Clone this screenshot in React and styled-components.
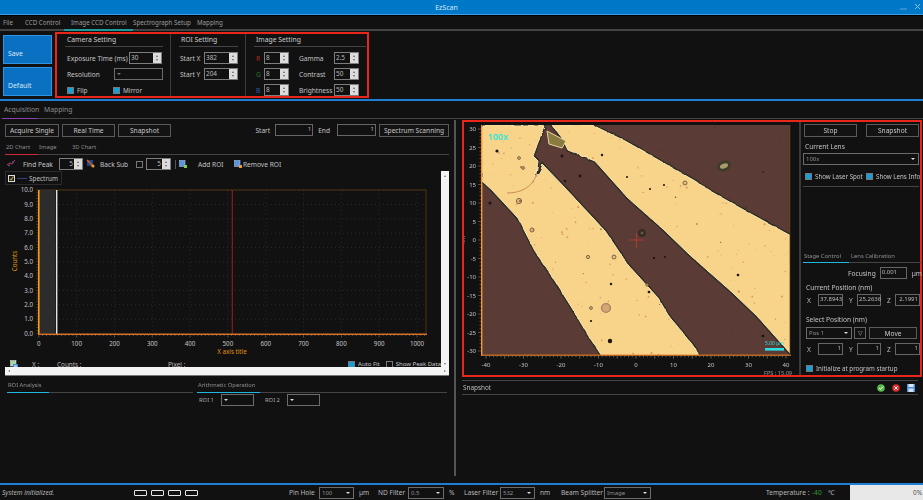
import React from 'react';
import styled, { createGlobalStyle } from 'styled-components';

const GlobalStyle = createGlobalStyle`
  html, body { margin: 0; padding: 0; background: #111; }
  body { font-family: "Noto Sans", "Liberation Sans", sans-serif; font-size: 6.6px; color: #c4c4c4; }
  * { box-sizing: border-box; }
`;

const Page = styled.div`
  width: 923px;
  height: 500px;
  display: flex;
  flex-direction: column;
  overflow: hidden;
  background: #111;
`;

const TitleBar = styled.div`
  height: 15px;
  flex: none;
  display: flex;
  align-items: center;
  justify-content: center;
  position: relative;
  background: #0078c8;
  border-bottom: 1px solid #3f9fe6;
  box-shadow: 0 1px 0 #000;
  color: #d5e8f6;
  font-size: 7px;
  padding-right: 30px;
`;

const WindowButtons = styled.div`
  position: absolute;
  right: 2px;
  top: 3px;
  display: flex;
  gap: 7px;
  align-items: center;
`;

const MenuBar = styled.div`
  height: 16px;
  flex: none;
  display: flex;
  align-items: flex-end;
  border-bottom: 2px solid #444;
  padding-left: 3px;
`;

const MenuItem = styled.div`
  width: ${(p) => p.$w}px;
  height: 13px;
  margin-bottom: -2px;
  padding-left: ${(p) => p.$pad || 0}px;
  border-bottom: 2px solid ${(p) => (p.$active ? '#1f9a9a' : 'transparent')};
  color: #9c9c9c;
  font-size: 6.2px;
  line-height: 10px;
`;

const Ribbon = styled.div`
  height: 70px;
  flex: none;
  display: flex;
  padding-left: 3px;
  gap: 3px;
  border-bottom: 2px solid #1f7fd4;
`;

const SideButtons = styled.div`
  display: flex;
  flex-direction: column;
  gap: 3px;
  padding-top: 4px;
`;

const BlueButton = styled.div`
  width: 49px;
  height: 29px;
  background: #0a70c2;
  border: 1px solid #2f95e0;
  color: #d9e9f5;
  font-size: 6.8px;
  padding: 13px 0 0 4px;
`;

const RedBox = styled.div`
  border: 2px solid #e8261a;
  background: #111;
`;

const SettingsBox = styled(RedBox)`
  width: 314px;
  height: 66px;
  margin-top: 1px;
  display: flex;
`;

const SettingGroup = styled.div`
  width: ${(p) => p.$w}px;
  height: 62px;
  padding: 0 ${(p) => p.$right || 0}px 0 ${(p) => p.$left || 0}px;
  border-right: ${(p) => (p.$last ? 'none' : '1px solid #3c3c3c')};
`;

const GroupTitle = styled.div`
  height: 13px;
  line-height: 11px;
  font-size: 6.8px;
  color: #cfcfcf;
  padding-left: 2px;
  border-bottom: 1px solid #444;
  margin-bottom: 5px;
`;

const FieldGrid = styled.div`
  display: grid;
  grid-template-columns: ${(p) => p.$cols};
  grid-auto-rows: 12px;
  row-gap: 4px;
  align-items: center;
`;

const Label = styled.span`
  color: ${(p) => p.$color || '#c4c4c4'};
  font-size: ${(p) => p.$size || 6.6}px;
  white-space: nowrap;
  padding-left: ${(p) => p.$pad || 0}px;
`;

const SpinFrame = styled.div`
  width: ${(p) => p.$w}px;
  height: 12px;
  display: flex;
  border: 1px solid #7d7d7d;
  background: #111;
`;

const SpinValue = styled.div`
  flex: 1;
  font-size: 6.4px;
  line-height: 9px;
  padding: 0 1px;
  text-align: ${(p) => (p.$right ? 'right' : 'left')};
  color: #bcbcbc;
`;

const SpinArrows = styled.div`
  width: 8px;
  background: #dcdcdc;
  display: flex;
  flex-direction: column;
  align-items: center;
  justify-content: center;
  gap: 2px;
  &::before, &::after {
    content: '';
    border-left: 1.5px solid transparent;
    border-right: 1.5px solid transparent;
  }
  &::before { border-bottom: 2px solid #666; }
  &::after { border-top: 2px solid #666; }
`;

const SelectFrame = styled.div`
  width: ${(p) => p.$w}px;
  height: ${(p) => p.$h || 12}px;
  flex: none;
  display: flex;
  align-items: center;
  justify-content: space-between;
  padding: 0 3px 0 2px;
  border: 1px solid ${(p) => p.$border || '#6c6c6c'};
  background: #111;
  font-size: 6px;
  color: #8f8f8f;
  &::after {
    content: '';
    border-left: 2.5px solid transparent;
    border-right: 2.5px solid transparent;
    border-top: 2.5px solid ${(p) => p.$arrow || '#ddd'};
  }
`;

const CheckRow = styled.div`
  display: flex;
  align-items: center;
  gap: 3px;
  font-size: ${(p) => p.$size || 6.4}px;
  white-space: nowrap;
  color: #c4c4c4;
`;

const CheckBox = styled.span`
  width: 7px;
  height: 7px;
  flex: none;
  border: 1px solid #777;
  background: ${(p) => (p.$on ? '#17a0d8' : '#111')};
`;

const FlipRow = styled.div`
  display: grid;
  grid-template-columns: 46px 50px;
  height: 12px;
  align-items: center;
`;

const Main = styled.div`
  flex: 1;
  min-height: 0;
  display: flex;
`;

const LeftColumn = styled.div`
  width: 457px;
  flex: none;
  display: flex;
  flex-direction: column;
`;

const PrimaryTabs = styled.div`
  height: 18px;
  flex: none;
  display: flex;
  gap: 4px;
  align-items: flex-end;
  margin-left: 2px;
  border-bottom: 1px solid #444;
  color: #8c8c8c;
  font-size: 6.8px;
`;

const PrimaryTab = styled.div`
  height: 14px;
  margin-bottom: -1px;
  width: ${(p) => p.$w}px;
  line-height: 10px;
  padding-left: 2px;
  border-bottom: 1px solid ${(p) => (p.$active ? '#8a3fb5' : 'transparent')};
`;

const LeftBody = styled.div`
  flex: 1;
  min-height: 0;
  display: flex;
  padding-top: 1px;
`;

const LeftContent = styled.div`
  width: 454px;
  flex: none;
  padding: 3px 0 0 5px;
`;

const ScrollRail = styled.div`
  width: 2px;
  height: 356px;
  background: #555;
`;

const AcquireBar = styled.div`
  height: 14px;
  display: flex;
  align-items: center;
  gap: 3px;
  width: 444px;
`;

const OutlineButton = styled.div`
  width: ${(p) => p.$w}px;
  height: ${(p) => p.$h || 13}px;
  flex: none;
  display: flex;
  align-items: center;
  justify-content: center;
  border: 1px solid #5a5a5a;
  background: #131313;
  font-size: 6.6px;
  color: #c8c8c8;
  white-space: nowrap;
`;

const BarSpacer = styled.div`
  flex: 1;
`;

const NumberBox = styled.div`
  width: ${(p) => p.$w}px;
  height: ${(p) => p.$h || 12}px;
  flex: none;
  border: 1px solid #666;
  background: #111;
  color: #bbb;
  font-size: 6px;
  line-height: ${(p) => (p.$h || 12) - 3}px;
  padding: 0 1px;
  text-align: ${(p) => (p.$left ? 'left' : 'right')};
`;

const ChartTabs = styled.div`
  width: 444px;
  height: 14px;
  margin-top: 4px;
  display: flex;
  align-items: flex-end;
  border-bottom: 1px solid #444;
  font-size: 5.8px;
  color: #8f8f8f;
`;

const ChartTab = styled.div`
  width: ${(p) => p.$w}px;
  height: 12px;
  margin-bottom: -1px;
  line-height: 9px;
  padding-left: 1px;
  border-bottom: 1px solid ${(p) => (p.$active ? '#d0263a' : 'transparent')};
`;

const ChartTools = styled.div`
  height: 14px;
  margin-top: 2px;
  display: flex;
  align-items: center;
`;

const ToolText = styled.span`
  font-size: 6.6px;
  color: #c4c4c4;
  white-space: nowrap;
  width: ${(p) => p.$w}px;
  padding-left: ${(p) => p.$pad || 0}px;
`;

const ChartFrame = styled.div`
  width: 444px;
  height: 205px;
  position: relative;
  border-bottom: 1px solid #777;
`;

const Legend = styled.div`
  width: 57px;
  height: 14px;
  display: flex;
  align-items: center;
  gap: 2px;
  padding-left: 2px;
  border: 1px solid #2c2c2c;
  font-size: 6.4px;
  color: #c0c0c0;
`;

const LegendCheck = styled.span`
  width: 7px;
  height: 7px;
  border: 1px solid #ddd;
  background: #222;
  color: #f2d12e;
  font-size: 7px;
  line-height: 5px;
`;

const LegendLine = styled.span`
  width: 10px;
  height: 1px;
  background: #33407c;
`;

const ChartSvg = styled.svg`
  display: block;
  width: 436px;
  height: 174px;
`;

const ReadoutRow = styled.div`
  width: 436px;
  height: 10px;
  display: flex;
  align-items: center;
  padding-left: 5px;
  font-size: 6.4px;
  color: #b8b8b8;
`;

const ReadoutText = styled.span`
  width: ${(p) => p.$w}px;
  white-space: nowrap;
`;

const VScroll = styled.div`
  position: absolute;
  right: 0;
  top: 0;
  width: 8px;
  height: 196px;
  background: #f4f4f4;
  display: flex;
  flex-direction: column;
  justify-content: space-between;
  align-items: center;
  padding: 4px 0 2px;
  &::before, &::after {
    content: '';
    border-left: 1.5px solid transparent;
    border-right: 1.5px solid transparent;
  }
  &::before { border-bottom: 2px solid #777; }
  &::after { border-top: 2px solid #777; }
`;

const HScroll = styled.div`
  position: absolute;
  left: 0;
  bottom: 0;
  width: 444px;
  height: 8px;
  background: #f4f4f4;
  display: flex;
  justify-content: space-between;
  align-items: center;
  padding: 0 3px;
  &::before, &::after {
    content: '';
    border-top: 1.5px solid transparent;
    border-bottom: 1.5px solid transparent;
  }
  &::before { border-right: 2px solid #777; }
  &::after { border-left: 2px solid #777; }
`;

const AnalysisRow = styled.div`
  display: flex;
  gap: 4px;
  margin-top: 5px;
  padding-left: 2px;
`;

const AnalysisPane = styled.div`
  width: ${(p) => p.$w}px;
`;

const AnalysisTab = styled.div`
  height: 12px;
  border-bottom: 1px solid #444;
  font-size: 5.8px;
  line-height: 9px;
  color: #8f8f8f;
  padding-left: 1px;
  position: relative;
  &::after {
    content: '';
    position: absolute;
    left: 0;
    bottom: -1px;
    height: 1px;
    width: ${(p) => p.$bar}px;
    background: #20b8e0;
  }
`;

const RoiRow = styled.div`
  display: flex;
  align-items: center;
  margin-top: 1px;
  padding-left: 2px;
`;

const RoiLabel = styled.span`
  width: ${(p) => p.$w}px;
  font-size: 5.8px;
  color: #a8a8a8;
`;

const RightColumn = styled.div`
  flex: 1;
  min-width: 0;
  padding-left: 5px;
  display: flex;
  flex-direction: column;
`;

const RightTopRule = styled.div`
  height: 18px;
  flex: none;
  border-bottom: 1px solid #444;
  margin-left: -5px;
`;

const ViewBox = styled(RedBox)`
  width: 460px;
  height: 257px;
  margin-top: 1px;
  display: flex;
`;

const MicroSvg = styled.svg`
  display: block;
  width: 335px;
  height: 253px;
  flex: none;
`;

const StagePanel = styled.div`
  flex: 1;
  border-left: 2px solid #3a3a3a;
  padding: 2px 0 0 2px;
`;

const StageButtons = styled.div`
  display: flex;
  gap: 9px;
  padding-left: 1px;
`;

const StageHeading = styled.div`
  font-size: 6.6px;
  color: #c4c4c4;
  padding-left: ${(p) => p.$pad || 1}px;
  margin-top: ${(p) => p.$top}px;
  height: 9px;
  line-height: 9px;
`;

const ChecksRow = styled.div`
  display: grid;
  grid-template-columns: 61px 60px;
  margin-top: 7px;
  padding-left: 2px;
`;

const ThinRule = styled.div`
  height: 1px;
  background: #444;
  margin-top: 5px;
  width: 116px;
`;

const StageTabs = styled.div`
  margin-top: 65px;
  width: 118px;
  height: 11px;
  display: flex;
  border-bottom: 1px solid #444;
  font-size: 5.8px;
  color: #8f8f8f;
  line-height: 8px;
`;

const StageTab = styled.div`
  width: ${(p) => p.$w}px;
  height: 11px;
  padding-left: 1px;
  border-bottom: 1px solid ${(p) => (p.$active ? '#20b8e0' : 'transparent')};
`;

const FocusRow = styled.div`
  display: flex;
  align-items: center;
  justify-content: flex-end;
  gap: 4px;
  margin-top: 4px;
  padding-right: 4px;
  height: 12px;
`;

const XyzRow = styled.div`
  display: grid;
  grid-template-columns: 12px 25px 14px 24px 14px 25px;
  align-items: center;
  margin-top: ${(p) => p.$top}px;
  padding-left: 3px;
  width: 116px;
`;

const AxisLetter = styled.span`
  font-size: 6.6px;
  color: #bdbdbd;
  padding-left: ${(p) => p.$pad || 1}px;
`;

const SelectRow = styled.div`
  display: flex;
  gap: 2px;
  margin-top: 3px;
  padding-left: 3px;
  align-items: center;
`;

const TriangleButton = styled.div`
  width: 12px;
  height: 12px;
  border: 1px solid #666;
  color: #aaa;
  font-size: 6px;
  line-height: 10px;
  text-align: center;
`;

const InitRow = styled.div`
  margin-top: 9px;
  padding-left: 3px;
`;

const SnapshotBar = styled.div`
  width: 456px;
  height: 15px;
  margin-top: 3px;
  border-top: 1px solid #444;
  border-bottom: 1px solid #444;
  display: flex;
  align-items: center;
  justify-content: space-between;
  padding: 0 3px 0 1px;
  font-size: 6.4px;
  color: #bdbdbd;
`;

const SnapshotIcons = styled.div`
  display: flex;
  gap: 7px;
  align-items: center;
`;

const StatusBar = styled.div`
  height: 17px;
  flex: none;
  display: flex;
  align-items: center;
  border-top: 2px solid #1f7fd4;
  background: #111;
  font-size: 6.6px;
`;

const StatusMessage = styled.span`
  width: 134px;
  padding-left: 2px;
  font-style: italic;
  color: #b4b4b4;
`;

const Leds = styled.div`
  width: 156px;
  display: flex;
  gap: 4px;
`;

const Led = styled.span`
  width: 13px;
  height: 6px;
  border: 1px solid #e8e8e8;
  border-radius: 1px;
`;

const StatusText = styled.span`
  width: ${(p) => p.$w}px;
  flex: none;
  color: ${(p) => p.$color || '#b8b8b8'};
  white-space: nowrap;
`;

const Progress = styled.div`
  width: 73px;
  height: 15px;
  flex: none;
  background: #e8e8e8;
  color: #555;
  font-size: 6.4px;
  line-height: 15px;
  text-align: right;
  padding-right: 1px;
`;

function Spin({ w, value, right }) {
  return (
    <SpinFrame $w={w}>
      <SpinValue $right={right}>{value}</SpinValue>
      <SpinArrows />
    </SpinFrame>
  );
}

function Check({ on, children, size }) {
  return (
    <CheckRow $size={size}>
      <CheckBox $on={on} />
      {children}
    </CheckRow>
  );
}

function PeakIcon() {
  return (
    <svg width="9" height="8" viewBox="0 0 9 8">
      <path d="M0 6 L3 4 L5 5 L8 1" stroke="#d3324a" strokeWidth="1" fill="none" />
      <path d="M1 7 L3 6 M5 3 L7 3" stroke="#3c68d8" strokeWidth="1" />
    </svg>
  );
}

function BackSubIcon() {
  return (
    <svg width="9" height="9" viewBox="0 0 9 9">
      <rect x="1" y="1" width="6" height="6" fill="#24467e" />
      <path d="M1 1 L7 7" stroke="#e05a2a" strokeWidth="1.2" />
      <circle cx="7" cy="7" r="1.6" fill="#f09a20" />
    </svg>
  );
}

function RoiIcon({ badge }) {
  return (
    <svg width="8" height="8" viewBox="0 0 8 8">
      <rect x="0.5" y="0.5" width="5.5" height="6" fill="#5f95d8" stroke="#9dc2ec" strokeWidth="0.6" />
      <rect x="5" y="5" width="3" height="3" fill={badge} />
    </svg>
  );
}

function SaveDataIcon() {
  return (
    <svg width="8" height="8" viewBox="0 0 8 8">
      <rect x="0.5" y="0.5" width="5.5" height="5.5" fill="#a9d4a4" stroke="#e6e6e6" strokeWidth="0.5" />
      <rect x="3" y="4" width="5" height="4" fill="#3a88d8" />
      <rect x="4" y="5.5" width="3" height="1" fill="#fff" />
    </svg>
  );
}

function SnapshotIcon({ kind }) {
  if (kind === 'save') {
    return (
      <svg width="8" height="8" viewBox="0 0 8 8">
        <rect width="8" height="8" fill="#4f8fe0" />
        <rect x="1.5" y="0" width="5" height="3" fill="#dbe9f7" />
        <rect x="1.5" y="4.5" width="5" height="3.5" fill="#cfe0f2" />
      </svg>
    );
  }
  const ok = kind === 'ok';
  return (
    <svg width="8" height="8" viewBox="0 0 8 8">
      <circle cx="4" cy="4" r="3.8" fill={ok ? '#58b848' : '#e02c2c'} />
      <path
        d={ok ? 'M2 4 L3.5 5.5 L6 2.5' : 'M2.4 2.4 L5.6 5.6 M5.6 2.4 L2.4 5.6'}
        stroke="#fff"
        strokeWidth="1"
        fill="none"
      />
    </svg>
  );
}

const xTicks = [0, 100, 200, 300, 400, 500, 600, 700, 800, 900, 1000];
const yTicks = [10, 9, 8, 7, 6, 5, 4, 3, 2, 1, 0];
const range = (n) => Array.from({ length: n }, (_, i) => i);

function SpectrumChart() {
  // viewBox uses the screen coordinates of the plot
  const px = (v) => 38.8 + v * 0.3782;
  const py = (v) => 335.5 - v * 14.33;
  return (
    <ChartSvg viewBox="5 187 436 174">
      {xTicks.map((t) => (
        <line key={t} x1={px(t)} x2={px(t)} y1="192" y2="336" stroke="#3a3a3a" strokeWidth="0.6" strokeDasharray="1 3" />
      ))}
      {yTicks.map((t) => (
        <line key={t} x1="39" x2="426" y1={py(t)} y2={py(t)} stroke="#3a3a3a" strokeWidth="0.6" strokeDasharray="1 3" />
      ))}
      <rect x="39.5" y="192" width="449" height="0" />
      <rect x="39" y="192" width="387" height="144" fill="none" stroke="#6a4412" strokeWidth="0.7" />
      <rect x="39.5" y="192" width="16" height="144" fill="#2c2c2c" />
      <rect x="56" y="192" width="1.4" height="144" fill="#e2e2e2" />
      <rect x="231.8" y="192" width="0.9" height="144" fill="#b3201a" />
      <rect x="38" y="192" width="1.6" height="145" fill="#f59a1e" />
      <rect x="38" y="335.6" width="389" height="1.4" fill="#d8702a" />
      {range(51).map((i) => (
        <line key={i} x1="36.5" x2="38" y1={192 + i * 2.866} y2={192 + i * 2.866} stroke="#a87428" strokeWidth="0.5" />
      ))}
      {range(103).map((i) => (
        <line key={i} x1={px(i * 10)} x2={px(i * 10)} y1="337" y2={i % 10 === 0 ? 339.5 : 338} stroke="#9a8a70" strokeWidth="0.5" />
      ))}
      {yTicks.map((t) => (
        <text key={t} x="33" y={py(t) + 2.2} textAnchor="end" fontSize="6.2" fill="#c4c4c4">{t.toFixed(1)}</text>
      ))}
      {xTicks.map((t) => (
        <text key={t} x={px(t)} y="347.5" textAnchor="middle" fontSize="6.2" fill="#c4c4c4">{t}</text>
      ))}
      <text x="232" y="355.5" textAnchor="middle" fontSize="6.2" fill="#e0930f">X axis title</text>
      <text transform="translate(17 263) rotate(-90)" textAnchor="middle" fontSize="6.2" fill="#e0930f">Counts</text>
    </ChartSvg>
  );
}

// seeded so the speckle is the same on every render
function speckle(count, seed, x0, y0, w, h) {
  let s = seed;
  const next = () => {
    s = (s * 16807) % 2147483647;
    return s / 2147483647;
  };
  return range(count).map(() => ({
    x: x0 + next() * w,
    y: y0 + next() * h,
    r: 0.3 + next() * 0.8,
    o: 0.25 + next() * 0.6,
  }));
}

const goldPolys = [
  '482,127 541,127 544,128 533,158 538,163 535,182 543,167 565,190 605,233 628,267 658,300 668,317 695,350 699,358 602,358 588,337 572,310 555,283 535,253 518,220 492,192 482,183',
  '552,127 592,127 625,143 660,163 695,183 710,193 740,210 791,238 791,356 757,318 733,295 690,257 662,230 628,200 595,163 568,152 562,140',
];

const goldDots = speckle(170, 4711, 482, 127, 308, 230);
const darkDots = speckle(60, 90210, 482, 127, 308, 230);

const bigSpots = [
  [519, 140, 1.2], [498, 155, 1.3], [520, 169, 2], [523, 170, 1], [519, 203, 2.6], [532, 232, 1.6],
], ringSpots = [
  [519, 160, 1.4], [523, 170, 1.4], [519, 203, 2.6], [532, 232, 2], [588, 259, 1.6], [614, 259, 2],
  [591, 310, 1.4], [685, 185, 2], [647, 287, 1.2],
], blackSpots = [
  [490, 205, 1.6], [580, 178, 1.4], [565, 183, 1.2], [497, 153, 1.6], [611, 286, 1.2], [591, 323, 1.1],
  [610, 343, 2.2], [654, 260, 1.1], [665, 259, 1], [649, 294, 1.3], [627, 179, 1], [602, 157, 1.2],
  [562, 158, 1.4], [664, 187, 1], [763, 338, 1.3], [763, 174, 0.8], [738, 277, 1.3], [650, 191, 1],
];

function MicroscopeView() {
  return (
    <MicroSvg viewBox="464 124 335 253">
      <defs>
        <filter id="rough" x="-5%" y="-5%" width="110%" height="110%">
          <feTurbulence type="fractalNoise" baseFrequency="0.16" numOctaves="2" seed="4" />
          <feDisplacementMap in="SourceGraphic" scale="4" />
        </filter>
        <filter id="soft"><feGaussianBlur stdDeviation="1" /></filter>
        <filter id="fine"><feGaussianBlur stdDeviation="0.35" /></filter>
        <clipPath id="plate"><rect x="482" y="127" width="308" height="230" /></clipPath>
        <clipPath id="goldOnly">
          {goldPolys.map((p) => <polygon key={p} points={p} />)}
        </clipPath>
      </defs>
      <g clipPath="url(#plate)">
        <rect x="482" y="127" width="308" height="230" fill="#5b3b36" />
        <g filter="url(#rough)">
          {goldPolys.map((p) => (
            <polygon key={p} points={p} fill="none" stroke="#2b2d22" strokeWidth="3.4" />
          ))}
          {goldPolys.map((p) => (
            <polygon key={p} points={p} fill="#f8d38a" stroke="#ffe9b4" strokeWidth="1" />
          ))}
        </g>
        <g filter="url(#fine)">
          {darkDots.map((d) => (
            <circle key={`${d.x}`} cx={d.x} cy={d.y} r={d.r * 0.7} fill="#3a2b24" opacity={d.o} />
          ))}
          <g clipPath="url(#goldOnly)">
            {goldDots.map((d) => (
              <circle key={`${d.x}`} cx={d.x} cy={d.y} r={d.r} fill="#c8763e" opacity={d.o} />
            ))}
          </g>
          {ringSpots.map(([x, y, r]) => (
            <circle key={`${x}-${y}`} cx={x} cy={y} r={r} fill="#e9c07c" stroke="#6b5a3a" strokeWidth="0.9" />
          ))}
          {blackSpots.map(([x, y, r]) => (
            <circle key={`${x}-${y}`} cx={x} cy={y} r={r} fill="#1b1512" />
          ))}
          {bigSpots.map(([x, y, r]) => (
            <circle key={`${x}-${y}`} cx={x + 1} cy={y} r={r * 0.5} fill="#7a3d2a" opacity="0.6" />
          ))}
          <circle cx="606" cy="310" r="4.4" fill="#d5a776" stroke="#a7835f" strokeWidth="1.4" />
          <circle cx="642" cy="235" r="3.4" fill="#3b322a" stroke="#2a2a20" strokeWidth="1" />
          <circle cx="642" cy="235" r="1.3" fill="#6b5a48" />
          <ellipse cx="724" cy="168" rx="7" ry="5.4" fill="#3d3a2a" transform="rotate(-20 724 168)" />
          <ellipse cx="724" cy="168" rx="4.2" ry="2.4" fill="#a99a6a" transform="rotate(-20 724 168)" />
          <path d="M547 133 L566 143 L562 150 L549 146 Z" fill="#8a7c40" stroke="#e9d59a" strokeWidth="1" />
          <path d="M507 195 C520 195 532 190 537 176" stroke="#c98b58" strokeWidth="1" fill="none" />
        </g>
        <path d="M629 242 H644 M636.5 235 V250" stroke="#c8402a" strokeWidth="0.7" />
        <rect x="765" y="350" width="19" height="2.6" fill="#2ae0e0" />
        <text x="774.5" y="347" textAnchor="middle" fontSize="5" fill="#2ae0e0">5.00 µm</text>
        <text x="488" y="142" fontSize="9" fontWeight="600" fill="#2ae6e0">100x</text>
      </g>
      <rect x="481" y="127" width="1.4" height="231" fill="#f59a1e" />
      <rect x="481" y="356.6" width="310" height="1.2" fill="#e07a22" />
      <rect x="789.6" y="127" width="0.7" height="230" fill="#6a4412" />
      {range(61).map((i) => (
        <line key={i} x1={i % 5 === 0 ? 478 : 479.5} x2="481" y1={131 + i * 3.7} y2={131 + i * 3.7} stroke="#c48628" strokeWidth="0.5" />
      ))}
      {range(81).map((i) => (
        <line key={i} x1={486 + i * 3.75} x2={486 + i * 3.75} y1="358" y2={i % 5 === 0 ? 360.5 : 359.2} stroke="#b5b5b5" strokeWidth="0.5" />
      ))}
      {[30, 25, 20, 15, 10, 5, 0, -5, -10, -15, -20, -25, -30].map((t) => (
        <text key={t} x="476" y={242 - t * 3.7 + 2.2} textAnchor="end" fontSize="6" fill="#c4c4c4">{t}</text>
      ))}
      {[-40, -30, -20, -10, 0, 10, 20, 30, 40].map((t) => (
        <text key={t} x={636 + t * 3.75} y="369" textAnchor="middle" fontSize="6" fill="#c4c4c4">{t}</text>
      ))}
      <text transform="translate(465 242) rotate(-90)" textAnchor="middle" fontSize="5" fill="#a8a8a8">nm</text>
      <text x="764" y="377" fontSize="5.6" fill="#9a9a9a">FPS : 15.09</text>
    </MicroSvg>
  );
}

function App() {
  return (
    <Page>
      <GlobalStyle />
      <TitleBar>
        EzScan
        <WindowButtons>
          <svg width="7" height="7" viewBox="0 0 7 7"><path d="M0 6 H7" stroke="#5fa5da" strokeWidth="1" /></svg>
          <svg width="7" height="7" viewBox="0 0 7 7"><path d="M1 1 L6 6 M6 1 L1 6" stroke="#8cc0e8" strokeWidth="1" /></svg>
        </WindowButtons>
      </TitleBar>

      <MenuBar>
        <MenuItem $w={22}>File</MenuItem>
        <MenuItem $w={39} $active={false}>CCD Control</MenuItem>
        <MenuItem $w={69} $active $pad={7}>Image CCD Control</MenuItem>
        <MenuItem $w={64}>Spectrograph Setup</MenuItem>
        <MenuItem $w={40}>Mapping</MenuItem>
      </MenuBar>

      <Ribbon>
        <SideButtons>
          <BlueButton>Save</BlueButton>
          <BlueButton>Default</BlueButton>
        </SideButtons>
        <SettingsBox>
          <SettingGroup $w={114} $left={8} $right={7}>
            <GroupTitle>Camera Setting</GroupTitle>
            <FieldGrid $cols="64px 35px">
              <Label $pad={2}>Exposure Time (ms)</Label>
              <Spin w={33} value="30" />
            </FieldGrid>
            <FieldGrid $cols="49px 50px" style={{ marginTop: 4 }}>
              <Label $pad={2}>Resolution</Label>
              <SelectFrame $w={49} $arrow="#777" />
            </FieldGrid>
            <FlipRow style={{ marginTop: 4, paddingLeft: 2 }}>
              <Check on>Flip</Check>
              <Check on>Mirror</Check>
            </FlipRow>
          </SettingGroup>
          <SettingGroup $w={75} $left={8} $right={7}>
            <GroupTitle>ROI Setting</GroupTitle>
            <FieldGrid $cols="25px 35px">
              <Label $pad={1}>Start X</Label>
              <Spin w={34} value="382" />
              <Label $pad={1}>Start Y</Label>
              <Spin w={34} value="204" />
            </FieldGrid>
          </SettingGroup>
          <SettingGroup $w={120} $left={8} $last>
            <GroupTitle>Image Setting</GroupTitle>
            <FieldGrid $cols="10px 34px 36px 26px">
              <Label $pad={2} $color="#b5281e">R</Label>
              <Spin w={25} value="8" />
              <Label $pad={1}>Gamma</Label>
              <Spin w={25} value="2.5" />
              <Label $pad={2} $color="#2a7a2a">G</Label>
              <Spin w={25} value="8" />
              <Label $pad={1}>Contrast</Label>
              <Spin w={25} value="50" />
              <Label $pad={2} $color="#2a5fb0">B</Label>
              <Spin w={25} value="8" />
              <Label $pad={1}>Brightness</Label>
              <Spin w={25} value="50" />
            </FieldGrid>
          </SettingGroup>
        </SettingsBox>
      </Ribbon>

      <Main>
        <LeftColumn>
          <PrimaryTabs>
            <PrimaryTab $w={36} $active>Acquisition</PrimaryTab>
            <PrimaryTab $w={30}>Mapping</PrimaryTab>
          </PrimaryTabs>
          <LeftBody>
            <LeftContent>
              <AcquireBar>
                <OutlineButton $w={54}>Acquire Single</OutlineButton>
                <OutlineButton $w={53}>Real Time</OutlineButton>
                <OutlineButton $w={53}>Snapshot</OutlineButton>
                <BarSpacer />
                <Label>Start</Label>
                <NumberBox $w={38} style={{ marginLeft: 2 }}>1</NumberBox>
                <Label style={{ marginLeft: 2 }}>End</Label>
                <NumberBox $w={39} style={{ marginLeft: 4 }}>1</NumberBox>
                <OutlineButton $w={70}>Spectrum Scanning</OutlineButton>
              </AcquireBar>

              <ChartTabs>
                <ChartTab $w={33} $active>2D Chart</ChartTab>
                <ChartTab $w={33}>Image</ChartTab>
                <ChartTab $w={33}>3D Chart</ChartTab>
              </ChartTabs>

              <ChartTools>
                <span style={{ width: 18, paddingLeft: 2 }}><PeakIcon /></span>
                <ToolText $w={36}>Find Peak</ToolText>
                <SpinFrame $w={24}><SpinValue $right>5</SpinValue><SpinArrows /></SpinFrame>
                <span style={{ width: 15, paddingLeft: 3 }}><BackSubIcon /></span>
                <ToolText $w={38} $pad={2}>Back Sub</ToolText>
                <CheckBox style={{ marginRight: 3 }} />
                <SpinFrame $w={25}><SpinValue $right>5</SpinValue><SpinArrows /></SpinFrame>
                <span style={{ width: 1, height: 9, background: '#555', margin: '0 3px 0 4px' }} />
                <RoiIcon badge="#7ed04a" />
                <ToolText $w={47} $pad={6} style={{ paddingLeft: 11 }}>Add ROI</ToolText>
                <RoiIcon badge="#f09a20" />
                <ToolText $w={44} $pad={1}>Remove ROI</ToolText>
              </ChartTools>

              <ChartFrame>
                <Legend>
                  <LegendCheck>✓</LegendCheck>
                  <LegendLine />
                  Spectrum
                </Legend>
                <SpectrumChart />
                <ReadoutRow>
                  <SaveDataIcon />
                  <ReadoutText $w={20} style={{ marginLeft: 14 }}>X :</ReadoutText>
                  <ReadoutText $w={76} style={{ marginLeft: 5 }}>Counts :</ReadoutText>
                  <ReadoutText $w={100} style={{ marginLeft: 35 }}>Pixel :</ReadoutText>
                  <BarSpacer />
                  <Check on size={6}>Auto Fit</Check>
                  <span style={{ width: 6 }} />
                  <Check size={6}>Show Peak Data</Check>
                </ReadoutRow>
                <VScroll />
                <HScroll />
              </ChartFrame>

              <AnalysisRow>
                <AnalysisPane $w={186}>
                  <AnalysisTab $bar={42}>ROI Analysis</AnalysisTab>
                </AnalysisPane>
                <AnalysisPane $w={250}>
                  <AnalysisTab $bar={63}>Arithmetic Operation</AnalysisTab>
                  <RoiRow>
                    <RoiLabel $w={22}>ROI 1</RoiLabel>
                    <SelectFrame $w={33} $h={12} />
                    <RoiLabel $w={33} style={{ paddingLeft: 11 }}>ROI 2</RoiLabel>
                    <SelectFrame $w={33} $h={12} />
                  </RoiRow>
                </AnalysisPane>
              </AnalysisRow>
            </LeftContent>
            <ScrollRail />
          </LeftBody>
        </LeftColumn>

        <RightColumn>
          <RightTopRule />
          <ViewBox>
            <MicroscopeView />
            <StagePanel>
              <StageButtons>
                <OutlineButton $w={53}>Stop</OutlineButton>
                <OutlineButton $w={53}>Snapshot</OutlineButton>
              </StageButtons>
              <StageHeading $top={5} $pad={2}>Current Lens</StageHeading>
              <SelectFrame $w={116} $h={12} style={{ marginTop: 2 }}>100x</SelectFrame>
              <ChecksRow>
                <Check on size={6.2}>Show Laser Spot</Check>
                <Check on size={6.2}>Show Lens Info</Check>
              </ChecksRow>
              <ThinRule />
              <StageTabs>
                <StageTab $w={46} $active>Stage Control</StageTab>
                <StageTab $w={50} style={{ paddingLeft: 2 }}>Lens Calibration</StageTab>
              </StageTabs>
              <FocusRow>
                <Label>Focusing</Label>
                <NumberBox $w={27} $left>0.001</NumberBox>
                <Label style={{ marginLeft: 1 }}>µm</Label>
              </FocusRow>
              <StageHeading $top={4} $pad={3}>Current Position (nm)</StageHeading>
              <XyzRow $top={2}>
                <AxisLetter>X</AxisLetter>
                <NumberBox $w={25}>37.8943</NumberBox>
                <AxisLetter $pad={6}>Y</AxisLetter>
                <NumberBox $w={24}>25.2636</NumberBox>
                <AxisLetter $pad={6}>Z</AxisLetter>
                <NumberBox $w={25}>2.1991</NumberBox>
              </XyzRow>
              <StageHeading $top={9} $pad={3}>Select Position (nm)</StageHeading>
              <SelectRow>
                <SelectFrame $w={46} $h={12}>Pos 1</SelectFrame>
                <TriangleButton>▽</TriangleButton>
                <OutlineButton $w={48} $h={12} style={{ marginLeft: 1 }}>Move</OutlineButton>
              </SelectRow>
              <XyzRow $top={4}>
                <AxisLetter>X</AxisLetter>
                <NumberBox $w={25}>1</NumberBox>
                <AxisLetter $pad={6}>Y</AxisLetter>
                <NumberBox $w={24}>1</NumberBox>
                <AxisLetter $pad={6}>Z</AxisLetter>
                <NumberBox $w={25}>1</NumberBox>
              </XyzRow>
              <InitRow>
                <Check on size={6.2}>Initialize at program startup</Check>
              </InitRow>
            </StagePanel>
          </ViewBox>
          <SnapshotBar>
            Snapshot
            <SnapshotIcons>
              <SnapshotIcon kind="ok" />
              <SnapshotIcon kind="close" />
              <SnapshotIcon kind="save" />
            </SnapshotIcons>
          </SnapshotBar>
        </RightColumn>
      </Main>

      <StatusBar>
        <StatusMessage>System initialized.</StatusMessage>
        <Leds><Led /><Led /><Led /><Led /></Leds>
        <StatusText $w={30}>Pin Hole</StatusText>
        <SelectFrame $w={35}>100</SelectFrame>
        <StatusText $w={24} style={{ paddingLeft: 5 }}>µm</StatusText>
        <StatusText $w={30}>ND Filter</StatusText>
        <SelectFrame $w={36}>0.5</SelectFrame>
        <StatusText $w={20} style={{ paddingLeft: 5 }}>%</StatusText>
        <StatusText $w={36}>Laser Filter</StatusText>
        <SelectFrame $w={35}>532</SelectFrame>
        <StatusText $w={26} style={{ paddingLeft: 5 }}>nm</StatusText>
        <StatusText $w={43}>Beam Splitter</StatusText>
        <SelectFrame $w={47}>Image</SelectFrame>
        <StatusText $w={115} style={{ paddingLeft: 115, overflow: 'visible' }} />
        <StatusText $w={46}>Temperature :</StatusText>
        <StatusText $w={16} $color="#2f9a2f">-40</StatusText>
        <StatusText $w={22}>℃</StatusText>
        <Progress>0%</Progress>
      </StatusBar>
    </Page>
  );
}

export default App;
